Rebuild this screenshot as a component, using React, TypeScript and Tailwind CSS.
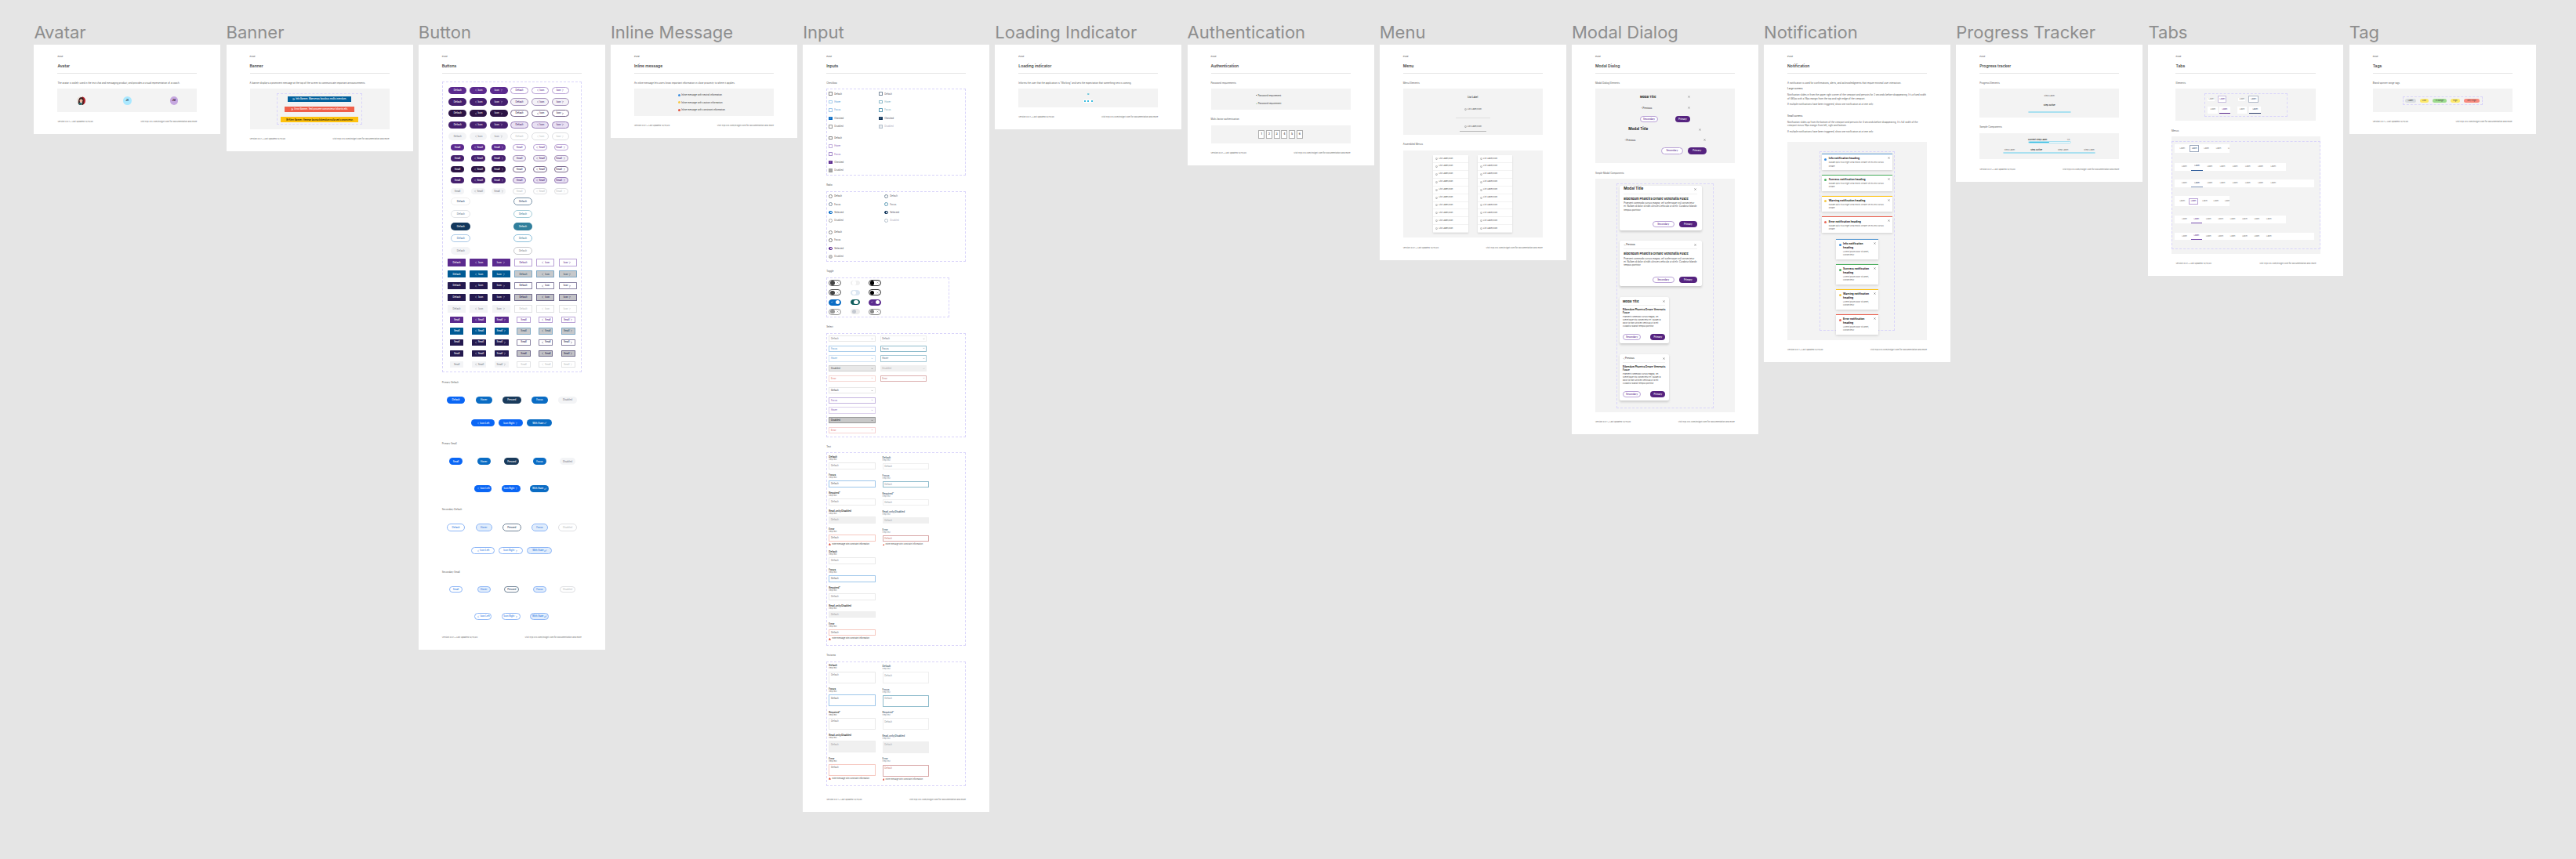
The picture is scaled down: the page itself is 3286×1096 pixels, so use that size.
import type { ReactNode } from "react";
import clsx from "clsx";
import { AlertTriangle, Check, ChevronDown, ChevronLeft, ChevronRight, CornerDownLeft, Info, Loader, X } from "lucide-react";

const dashed = "border border-dashed border-[#d9d4fa]";
const grey = "bg-[#f3f3f3]";

function Label({ children, className }: { children: ReactNode; className?: string }) {
  return <p className={clsx("mt-[10px] mb-[5.5px] text-[2.9px] leading-[4px] text-[#555] whitespace-nowrap", className)}>{children}</p>;
}

function Frame({
  name,
  title,
  height,
  wide,
  children,
}: {
  name: string;
  title: string;
  height: string;
  wide?: boolean;
  children: ReactNode;
}) {
  return (
    <div className="shrink-0">
      <div className="mt-[28px] mb-[3px] h-[26px] whitespace-nowrap text-[22px] leading-[26px] text-[#8e8e8e]">{name}</div>
      <div className={clsx("flex flex-col bg-white pt-[13.3px]", wide ? "w-[249px] px-[35px]" : "w-[238px] px-[30px]", height)}>
        <p className="text-[2.7px] leading-[4px] text-[#444]">Pulse</p>
        <p className="mt-[6.7px] h-[6px] text-[5px] font-semibold leading-[6px] text-[#444] whitespace-nowrap">{title}</p>
        <div className="mt-[6px] h-[1px] shrink-0 bg-[#e4e4e4]" />
        {children}
        <div className="mt-auto flex justify-between pb-[14px] pt-[2px] text-[2.6px] leading-[4px] text-[#666] whitespace-nowrap">
          <span>Version 0.0.1 • Last updated 12/15/20</span>
          <span>Visit hyp.cvs.com/insight.com for documentation and more</span>
        </div>
      </div>
    </div>
  );
}

function Btn({ text, icon, className }: { text: string; icon?: "left" | "right" | "return"; className?: string }) {
  return (
    <div className={clsx("flex shrink-0 items-center justify-center gap-[0.8px] whitespace-nowrap text-[2.9px] font-medium", className)}>
      {icon === "left" && <ChevronLeft size={4} strokeWidth={2.6} />}
      {text}
      {icon === "right" && <ChevronRight size={4} strokeWidth={2.6} />}
      {icon === "return" && <CornerDownLeft size={3.4} strokeWidth={2.4} />}
    </div>
  );
}

const pillRows = [
  ["bg-[#5b2a8e] text-white", "border border-[#b9a2d6] bg-white text-[#5b2a8e]"],
  ["bg-[#45206e] text-white", "border border-[#a794bd] bg-[#f4f2f7] text-[#45206e]"],
  ["bg-[#2c1445] text-white", "border border-[#7b6a8e] bg-white text-[#2c1445]"],
  ["bg-[#45206e] text-white", "border border-[#9a80ba] bg-[#e9e1f3] text-[#45206e]"],
  ["bg-[#f3f4f6] text-[#7f838c]", "border border-[#dfe0e3] bg-white text-[#bcbfc4]"],
];

const squareRows = [
  ["bg-[#5b2a8e] text-white", "border border-[#b9a2d6] bg-white text-[#5b2a8e]"],
  ["bg-[#005a94] text-white", "border border-[#7fa9c6] bg-[#c6c8ca] text-[#2b4a66]"],
  ["bg-[#241a4f] text-white", "border border-[#8a84a3] bg-white text-[#241a4f]"],
  ["bg-[#241a4f] text-white", "border border-[#6f6a8c] bg-[#c2c2c6] text-[#241a4f]"],
  ["bg-[#f3f4f6] text-[#7f838c]", "border border-[#e2e3e5] bg-white text-[#bcbfc4]"],
];

function Matrix({
  rows,
  first,
  widths,
  shape,
  rowGap,
  colGap,
  indent,
  top,
}: {
  rows: string[][];
  first: string;
  widths: string[];
  shape: string;
  rowGap: string;
  colGap: string;
  indent: string;
  top: string;
}) {
  const labels: { text: string; icon?: "left" | "right" }[] = [
    { text: first },
    { text: first === "Default" ? "Icon" : first, icon: "left" },
    { text: first === "Default" ? "Icon" : first, icon: "right" },
  ];
  return (
    <div className={clsx("flex flex-col", rowGap, indent, top)}>
      {rows.map((row, i) => (
        <div key={i} className={clsx("flex", colGap)}>
          {[0, 1].map((t) =>
            labels.map((l, j) => <Btn key={`${t}${j}`} text={l.text} icon={l.icon} className={clsx(shape, widths[t * 3 + j], row[t])} />),
          )}
        </div>
      ))}
    </div>
  );
}

function ButtonSection({
  title,
  small,
  tones,
  icons,
  rowTwoGap,
  labelTop,
}: {
  title: string;
  small?: boolean;
  tones: string[];
  icons: string[];
  rowTwoGap: string;
  labelTop: string;
}) {
  const names = small ? ["Small", "Hover", "Pressed", "Focus", "Disabled"] : ["Default", "Hover", "Pressed", "Focus", "Disabled"];
  const w = small
    ? ["w-[16.3px]", "w-[17px]", "w-[19.3px]", "w-[17px]", "w-[20.7px]"]
    : ["w-[23px]", "w-[21px]", "w-[24px]", "w-[21.3px]", "w-[24.7px]"];
  const w2 = small ? ["w-[22.3px]", "w-[23.7px]", "w-[24.3px]"] : ["w-[29.7px]", "w-[31.7px]", "w-[32px]"];
  const h = small ? "h-[8.7px] text-[2.6px]" : "h-[9.3px]";
  return (
    <div>
      <Label className={clsx("!mb-0", labelTop)}>{title}</Label>
      <div className="mt-[16px] grid grid-cols-5 justify-items-center">
        {names.map((n, i) => (
          <Btn key={n} text={n} className={clsx("rounded-full", h, w[i], tones[i])} />
        ))}
      </div>
      <div className={clsx("flex justify-center", small ? "mt-[26px]" : "mt-[20.3px]", rowTwoGap)}>
        <Btn text="Icon Left" icon="left" className={clsx("rounded-full", h, w2[0], icons[0])} />
        <Btn text="Icon Right" icon="right" className={clsx("rounded-full", h, w2[1], icons[1])} />
        <Btn text="With State" icon="return" className={clsx("rounded-full", h, w2[2], icons[2])} />
      </div>
    </div>
  );
}

const primaryTones = [
  "bg-[#0a66f5] text-white",
  "bg-[#0a6cc4] text-white",
  "bg-[#1a3b5c] text-white",
  "bg-[#0a6cc4] text-white",
  "bg-[#f3f4f6] text-[#7f838c]",
];
const secondaryTones = [
  "border border-[#8db6f7] bg-white text-[#2f78e0]",
  "border border-[#8db6f7] bg-[#e1edfc] text-[#2f78e0]",
  "border border-[#75879a] bg-white text-[#1a3b5c]",
  "border border-[#8db6f7] bg-[#e1edfc] text-[#2f78e0]",
  "border border-[#dfe0e3] bg-white text-[#bcbfc4]",
];
const primaryIcons = ["bg-[#0a66f5] text-white", "bg-[#0a66f5] text-white", "bg-[#0a6cc4] text-white"];
const secondaryIcons = [
  "border border-[#8db6f7] bg-white text-[#2f78e0]",
  "border border-[#8db6f7] bg-white text-[#2f78e0]",
  "border border-[#8db6f7] bg-[#e1edfc] text-[#2f78e0]",
];

function Buttons() {
  return (
    <>
      <div className={clsx("mt-[9.6px] h-[371.3px] shrink-0", dashed)}>
        <Matrix
          rows={pillRows}
          first="Default"
          shape="rounded-full h-[9.3px]"
          widths={["w-[23.3px]", "w-[22.7px]", "w-[22.7px]", "w-[23.3px]", "w-[22.7px]", "w-[22.7px]"]}
          rowGap="gap-[5.37px]"
          colGap="gap-[3.4px]"
          indent="ml-[7.3px]"
          top="mt-[6px]"
        />
        <Matrix
          rows={pillRows}
          first="Small"
          shape="rounded-full h-[8.7px] text-[2.6px]"
          widths={["w-[17px]", "w-[18px]", "w-[18px]", "w-[17px]", "w-[18px]", "w-[18px]"]}
          rowGap="gap-[5.3px]"
          colGap="gap-[8.7px]"
          indent="ml-[10.3px]"
          top="mt-[5.3px]"
        />
        <div className="ml-[10.7px] mt-[4px] flex flex-col gap-[5.67px]">
          {[
            ["border border-[#eeeeee] bg-white text-[#2f4a6d]", "border border-[#7a93a8] bg-white text-[#2f4a6d]"],
            ["border border-[#e3e5e8] bg-white text-[#6d7f94]", "border border-[#a5cdd9] bg-white text-[#3f7f9a]"],
            ["bg-[#12375c] text-white", "bg-[#317f9c] text-white"],
            ["border border-[#a9c8e6] bg-white text-[#3f78b0]", "border border-[#8cc0da] bg-white text-[#3f7f9a]"],
            ["bg-[#f3f4f6] text-[#7f838c]", "border border-[#c8c9cc] bg-white text-[#8a8d92]"],
          ].map((r, i) => (
            <div key={i} className="flex gap-[55px]">
              <Btn text="Default" className={clsx("h-[10px] w-[24.7px] rounded-full", r[0])} />
              <Btn text="Default" className={clsx("h-[10px] w-[23.7px] rounded-full", r[1])} />
            </div>
          ))}
        </div>
        <Matrix
          rows={squareRows}
          first="Default"
          shape="h-[9.3px] rounded-[0.6px]"
          widths={Array(6).fill("w-[23px]")}
          rowGap="gap-[5.45px]"
          colGap="gap-[5.3px]"
          indent="ml-[6.3px]"
          top="mt-[5.35px]"
        />
        <Matrix
          rows={squareRows}
          first="Small"
          shape="h-[8.3px] rounded-[0.6px] text-[2.6px]"
          widths={["w-[17.3px]", "w-[18px]", "w-[18px]", "w-[17.3px]", "w-[18px]", "w-[18px]"]}
          rowGap="gap-[5.9px]"
          colGap="gap-[10.7px]"
          indent="ml-[9.3px]"
          top="mt-[5.5px]"
        />
      </div>
      <ButtonSection title="Primary Default" labelTop="!mt-[10.7px]" tones={primaryTones} icons={primaryIcons} rowTwoGap="gap-[5px]" />
      <ButtonSection title="Primary Small" labelTop="!mt-[20px]" small tones={primaryTones} icons={primaryIcons} rowTwoGap="gap-[12.5px]" />
      <ButtonSection title="Secondary Default" labelTop="!mt-[20.6px]" tones={secondaryTones} icons={secondaryIcons} rowTwoGap="gap-[5px]" />
      <ButtonSection title="Secondary Small" labelTop="!mt-[20.3px]" small tones={secondaryTones} icons={secondaryIcons} rowTwoGap="gap-[12.5px]" />
    </>
  );
}

function Avatars() {
  return (
    <>
      <Label>The avatar is widely used in the text chat and messaging product, and provides a visual representation of a coach.</Label>
      <div className={clsx("grid h-[29.7px] grid-cols-3 place-items-center", grey)}>
        <svg width="11" height="11" viewBox="0 0 22 22">
          <clipPath id="face">
            <circle cx="11" cy="11" r="11" />
          </clipPath>
          <g clipPath="url(#face)">
            <rect width="22" height="22" fill="#eadfd8" />
            <rect x="14" width="8" height="22" fill="#b3202a" />
            <path d="M4 22 C3 8 6 2 12 2 C18 2 18 10 17 22 L13 22 C15 14 14 8 11 7 C8 8 8 18 9 22Z" fill="#3c1d1d" />
            <circle cx="11" cy="11" r="4" fill="#e9b9a0" />
            <rect x="5" y="16" width="8" height="6" fill="#2b6a6a" />
          </g>
        </svg>
        <div className="flex h-[10.4px] w-[10.4px] items-center justify-center rounded-full bg-[#a9e8ff] text-[3px] font-semibold text-[#123]">JA</div>
        <div className="flex h-[10.4px] w-[10.4px] items-center justify-center rounded-full bg-[#c6a8e0] text-[3px] font-semibold text-[#312]">JM</div>
      </div>
    </>
  );
}

function Banners() {
  const bars = [
    ["bg-[#00609c] text-white w-[81px] h-[6.7px]", "Info Banner. Maecenas faucibus mollis interdum."],
    ["bg-[#f0604a] text-white w-[89.5px] h-[7px]", "Error Banner. Sed posuere consectetur lobortis elit."],
    ["bg-[#ffc20e] text-black w-[99px] h-[7px]", "Alert Banner. Aenean lacinia bibendum nulla sed consectetur."],
  ];
  return (
    <>
      <Label>A banner displays a prominent message at the top of the screen to communicate important announcements.</Label>
      <div className={clsx("flex h-[52px] items-center justify-center", grey)}>
        <div className={clsx("flex h-[40px] w-[109px] flex-col items-center gap-[6.3px] pt-[2.5px]", dashed)}>
          {bars.map(([c, t]) => (
            <div key={t} className={clsx("flex items-center justify-center gap-[1px] whitespace-nowrap text-[2.8px] font-medium", c)}>
              <Info size={3} strokeWidth={3} />
              {t}
            </div>
          ))}
        </div>
      </div>
    </>
  );
}

function InlineMessages() {
  return (
    <>
      <Label>An inline message lets users know important information in close proximity to where it applies.</Label>
      <div className={clsx("flex h-[34.7px] flex-col gap-[5.5px] pl-[56px] pt-[5.8px]", grey)}>
        {[
          ["bg-[#3d8fe0]", "neutral"],
          ["bg-[#f6c945]", "caution"],
          ["bg-[#e0533f]", "constraint"],
        ].map(([c, t]) => (
          <div key={t} className="flex h-[4px] items-center gap-[1.2px] whitespace-nowrap text-[2.8px] text-[#333]">
            <span className={clsx("h-[3px] w-[3px] rounded-full", c)} />
            Inline message with {t} information.
          </div>
        ))}
      </div>
    </>
  );
}

function Loading() {
  return (
    <>
      <Label>Informs the user that the application is "Working" and sets the expectation that something new is coming.</Label>
      <div className={clsx("flex h-[23.7px] flex-col items-center pt-[5.2px]", grey)}>
        <Loader size={2.4} strokeWidth={4} className="text-[#00a3c9]" />
        <div className="mt-[6.4px] flex h-[3.7px] w-[12px] items-center justify-center gap-[2.6px] bg-white">
          <span className="h-[1.8px] w-[1.8px] rounded-full bg-[#00a9d4]" />
          <span className="h-[1.8px] w-[1.8px] rounded-full bg-[#00a9d4]" />
          <span className="h-[1.8px] w-[1.8px] rounded-full bg-[#00a9d4]" />
        </div>
      </div>
    </>
  );
}

function Authentication() {
  return (
    <>
      <Label>Password requirements</Label>
      <div className={clsx("flex h-[27px] flex-col gap-[6.4px] pl-[57px] pt-[6.3px]", grey)}>
        <div className="flex h-[4px] items-center gap-[1px] text-[2.8px] text-[#333]">
          <span className="h-[1px] w-[1px] rounded-full bg-[#333]" />
          <span className="ml-[1px]">Password requirement</span>
        </div>
        <div className="flex h-[4px] items-center gap-[0.6px] text-[2.8px] text-[#333]">
          <Check size={2.6} strokeWidth={4} className="text-[#3da35a]" />
          Password requirement
        </div>
      </div>
      <Label>Multi-factor authentication</Label>
      <div className={clsx("flex h-[23px] items-center justify-center gap-[1.5px]", grey)}>
        {[1, 2, 3, 4, 5, 6].map((n) => (
          <div key={n} className="flex h-[11.7px] w-[8.2px] items-center justify-center border border-[#b0b0b0] bg-white text-[3.4px] font-medium text-[#222]">
            {n}
          </div>
        ))}
      </div>
    </>
  );
}

function MenuItem({ className }: { className?: string }) {
  return (
    <div className={clsx("flex items-center gap-[1.4px] whitespace-nowrap text-[2.6px] text-[#444]", className)}>
      <svg width="3" height="3" viewBox="0 0 6 6" fill="none" stroke="#777" strokeWidth="0.8">
        <circle cx="3" cy="3" r="2.2" />
        <path d="M3 5.5V3" />
      </svg>
      List Label/Icon
    </div>
  );
}

function Menus() {
  return (
    <>
      <Label>Menu Elements</Label>
      <div className={clsx("flex h-[59px] flex-col items-center pt-[8.7px]", grey)}>
        <p className="h-[4px] text-[2.8px] font-semibold leading-[4px] text-[#333]">List Label</p>
        <MenuItem className="mt-[11.6px] h-[4px]" />
        <div className="mt-[8.7px] h-[1px] w-[44px] bg-[#dedede]" />
        <MenuItem className="mt-[8.5px] h-[4px]" />
        <div className="mt-[2.6px] h-[1px] w-[34px] bg-[#b5b5b5]" />
      </div>
      <Label>Assembled Menus</Label>
      <div className={clsx("flex h-[111.3px] justify-center gap-[12px] pt-[6px]", grey)}>
        {[0, 1].map((c) => (
          <div key={c} className="h-[99.3px] w-[44.6px] bg-white shadow-[0_1px_2px_rgba(0,0,0,0.12)]">
            {Array.from({ length: 10 }).map((_, i) => (
              <MenuItem key={i} className="h-[9.93px] border-b border-[#f2f2f2] pl-[3px]" />
            ))}
          </div>
        ))}
      </div>
    </>
  );
}

const longBody =
  "Praesent commodo cursus magna, vel scelerisque nisl consectetur et. Nullam id dolor id nibh ultricies vehicula ut id elit. Curabitur blandit tempus porttitor.";

function Head({ prev, big }: { prev?: boolean; big?: boolean }) {
  return prev ? (
    <span className="flex items-center text-[2.8px] font-medium text-[#333]">
      <ChevronLeft size={3} strokeWidth={2.6} />
      Previous
    </span>
  ) : (
    <span className={clsx("font-bold text-[#222]", big ? "text-[4.6px]" : "text-[3.8px]")}>Modal Title</span>
  );
}

function ModalCard({ prev, small, className }: { prev?: boolean; small?: boolean; className: string }) {
  return (
    <div className={clsx("flex flex-col rounded-[2px] bg-white shadow-[0_1.5px_3px_rgba(0,0,0,0.16)]", small ? "w-[63.3px] px-[4.5px]" : "w-[105.3px] px-[5.7px]", className)}>
      <div className={clsx("flex h-[11px] shrink-0 items-center justify-between border-b border-[#f1f1f1]", small ? "" : "pr-[0.8px]")}>
        <Head prev={prev} big={!small} />
        <X size={3} strokeWidth={3.4} className="text-[#222]" />
      </div>
      <p className={clsx("mt-[3px] font-bold text-[#222]", small ? "text-[3px] leading-[4px]" : "text-[3.9px] leading-[5px] whitespace-nowrap")}>
        Bibendum Pharetra Ornare Venenatis Fusce
      </p>
      <p className={clsx("mt-[1.4px] text-[#444]", small ? "text-[2.5px] leading-[4.1px]" : "text-[2.85px] leading-[4.4px]")}>{longBody}</p>
      <div className={clsx("mt-auto flex pb-[4px]", small ? "justify-between" : "justify-end gap-[5.7px]")}>
        <Btn
          text="Secondary"
          className={clsx("h-[8.6px] rounded-full border border-[#b9a2d6] bg-white text-[2.4px] text-[#5b2a8e]", small ? "w-[23px]" : "w-[28.3px]")}
        />
        <Btn text="Primary" className={clsx("h-[8.6px] rounded-full bg-[#55237f] text-[2.4px] text-white", small ? "w-[19px]" : "w-[23.7px]")} />
      </div>
    </div>
  );
}

function Modals() {
  return (
    <>
      <Label>Modal Dialog Elements</Label>
      <div className={clsx("relative flex h-[95px] flex-col text-[#222]", grey)}>
        <div className="ml-[57px] mt-[8px] flex h-[5px] w-[64px] items-center justify-between">
          <Head />
          <X size={3} strokeWidth={3} />
        </div>
        <div className="ml-[57.7px] mt-[9px] flex h-[5px] w-[63.3px] items-center justify-between">
          <Head prev />
          <X size={3} strokeWidth={3} />
        </div>
        <div className="ml-[57px] mt-[7.8px] flex w-[64px] items-center justify-between">
          <Btn text="Secondary" className="h-[8px] w-[23.3px] rounded-full border border-[#b9a2d6] bg-white text-[2.3px] text-[#5b2a8e]" />
          <Btn text="Primary" className="h-[8px] w-[19px] rounded-full bg-[#55237f] text-[2.3px] text-white" />
        </div>
        <div className="ml-[42.3px] mt-[6px] flex h-[6px] w-[93px] items-center justify-between">
          <Head big />
          <X size={3} strokeWidth={3} />
        </div>
        <div className="ml-[36.7px] mt-[8px] flex h-[5px] w-[104.5px] items-center justify-between">
          <Head prev />
          <X size={3} strokeWidth={3} />
        </div>
        <div className="ml-[84.3px] mt-[6.5px] flex w-[57.4px] items-center justify-between">
          <Btn text="Secondary" className="h-[9px] w-[27.4px] rounded-full border border-[#b9a2d6] bg-white text-[2.6px] text-[#5b2a8e]" />
          <Btn text="Primary" className="h-[9px] w-[23.7px] rounded-full bg-[#55237f] text-[2.6px] text-white" />
        </div>
      </div>
      <Label className="!mt-[10.2px] !mb-[5px]">Simple Modal Components</Label>
      <div className={clsx("flex h-[298.5px] justify-center pt-[6px]", grey)}>
        <div className={clsx("flex h-[287px] w-[123.4px] flex-col pl-[2.4px] pt-[2px]", dashed)}>
          <ModalCard className="h-[57.5px]" />
          <ModalCard prev className="mt-[13px] h-[58px]" />
          <ModalCard small className="mt-[14.3px] h-[59px]" />
          <ModalCard small prev className="mt-[13.8px] h-[59px]" />
        </div>
      </div>
    </>
  );
}

const tones = [
  ["Info", "border-[#5a9bd4]", "bg-[#3d8fe0]"],
  ["Success", "border-[#4caf60]", "bg-[#4caf60]"],
  ["Warning", "border-[#ffc20e]", "bg-[#f6c945]"],
  ["Error", "border-[#ea5a47]", "bg-[#ea6a5a]"],
];

function Toast({ tone, small }: { tone: string[]; small?: boolean }) {
  return (
    <div
      className={clsx(
        "relative flex shrink-0 flex-col border-t-[1.4px] bg-white shadow-[0_1px_3px_rgba(0,0,0,0.16)]",
        tone[1],
        small ? "w-[53.3px] pb-[2.4px] pl-[8.7px] pr-[10px] pt-[3.4px]" : "h-[20.7px] w-[90.7px] pl-[9px] pt-[3.4px]",
      )}
    >
      <span className={clsx("absolute top-[4.6px] h-[3px] w-[3px] rounded-full", small ? "left-[3.3px]" : "left-[3.2px]", tone[2])} />
      <X size={3} strokeWidth={3.2} className="absolute right-[3px] top-[3px] text-[#222]" />
      <p className="text-[3.3px] font-bold leading-[4.4px] text-[#222]">{tone[0]} notification heading</p>
      <p className={clsx("mt-[1.4px] text-[#666]", small ? "w-[34px] text-[2.5px] leading-[4.4px]" : "w-[74px] text-[2.55px] leading-[4.4px]")}>
        {small ? "Lorem ipsum dolor sit amet, consectetur." : "Nullam quis risus eget urna mollis ornare vel eu leo cursus ornare."}
      </p>
    </div>
  );
}

function Notifications() {
  return (
    <>
      <div className="mt-[9.7px] flex flex-col gap-[3.4px] text-[2.9px] leading-[4.4px] text-[#555]">
        <p>A notification is used for confirmations, alerts, and acknowledgments that require minimal user interaction.</p>
        <p className="font-medium">Large screens</p>
        <p>
          Notification slides in from the upper right corner of the viewport and persists for 3 seconds before disappearing. It's a fixed width of 480px with a
          16px margin from the top and right edge of the viewport.
        </p>
        <p>If multiple notifications have been triggered, show one notification at a time only.</p>
        <p className="mt-[7px] font-medium">Small screens</p>
        <p>
          Notification slides up from the bottom of the viewport and persists for 4 seconds before disappearing. It's full width of the viewport minus 16px
          margin from left, right and bottom.
        </p>
        <p>If multiple notifications have been triggered, show one notification at a time only.</p>
      </div>
      <div className={clsx("mt-[10.4px] flex h-[252.7px] shrink-0 justify-center pt-[12px]", grey)}>
        <div className={clsx("flex h-[229px] w-[96.4px] flex-col items-center pt-[2px]", dashed)}>
          <div className="flex flex-col gap-[6.1px]">
            {tones.map((t) => (
              <Toast key={t[0]} tone={t} />
            ))}
          </div>
          <div className="mt-[8px] flex flex-col gap-[6.2px]">
            {tones.map((t) => (
              <Toast key={t[0]} tone={t} small />
            ))}
          </div>
        </div>
      </div>
    </>
  );
}

function Bar({ width, fill }: { width: string; fill: string }) {
  return (
    <div className={clsx("h-[2.4px] overflow-hidden rounded-full border-[0.5px] border-[#a9e0f0] bg-white", width)}>
      <div className={clsx("h-full rounded-full bg-[#35bde3]", fill)} />
    </div>
  );
}

function Progress() {
  return (
    <>
      <Label>Progress Elements</Label>
      <div className={clsx("flex h-[37px] flex-col items-center pt-[6.7px] text-[2.7px]", grey)}>
        <p className="h-[4px] leading-[4px] text-[#666]">Step Label</p>
        <p className="mt-[8.3px] h-[4px] font-semibold leading-[4px] text-[#222]">Step Active</p>
        <div className="mt-[5.5px]">
          <Bar width="w-[54.5px]" fill="w-[56%]" />
        </div>
      </div>
      <Label>Sample Components</Label>
      <div className={clsx("flex h-[33px] flex-col items-center pt-[5.7px] text-[2.7px]", grey)}>
        <div className="flex h-[4px] w-[54.5px] justify-between pr-[1px] leading-[4px]">
          <span className="font-semibold text-[#222]">Current Step Label</span>
          <span className="text-[#555]">1/5</span>
        </div>
        <div className="mt-[0.6px]">
          <Bar width="w-[54.5px]" fill="w-[50%]" />
        </div>
        <div className="mt-[6.5px] flex h-[4px] w-[118px] justify-between px-[1.5px] leading-[4px] text-[#666]">
          <span>Step Label</span>
          <span className="font-semibold text-[#222]">Step Active</span>
          <span>Step Label</span>
          <span>Step Label</span>
        </div>
        <div className="mt-[0.8px]">
          <Bar width="w-[118px]" fill="w-[50%]" />
        </div>
      </div>
    </>
  );
}

function TabRow({
  bar,
  count,
  cell,
  pad,
  selected,
  boxed,
  height,
  mt,
}: {
  bar: string;
  count: number;
  cell: string;
  pad: string;
  selected: string;
  boxed?: boolean;
  height: string;
  mt: string;
}) {
  return (
    <div className={clsx("flex items-center overflow-hidden bg-white text-[2.6px] text-[#777]", bar, height, pad, mt)}>
      {Array.from({ length: count }).map((_, i) => (
        <div key={i} className={clsx("flex h-full shrink-0 items-center justify-center", cell)}>
          {i === 1 ? (
            boxed ? (
              <span className={clsx("flex h-[8.3px] w-[12.3px] items-center justify-center border", selected)}>Label</span>
            ) : (
              <span className={clsx("flex h-full w-[14.4px] items-center justify-center border-b", selected)}>Label</span>
            )
          ) : (
            "Label"
          )}
        </div>
      ))}
    </div>
  );
}

function TabsDemo() {
  return (
    <>
      <Label>Elements</Label>
      <div className={clsx("flex h-[41px] justify-center pt-[6px]", grey)}>
        <div className={clsx("flex h-[29.3px] w-[105.4px] flex-col gap-[5px] pl-[3.2px] pt-[2px] text-[2.6px] text-[#777]", dashed)}>
          <div className="flex h-[8.3px] items-center">
            <span className="w-[9px] bg-white text-center">Label</span>
            <span className="ml-[4px] flex h-[8.3px] w-[11px] items-center justify-center border border-[#c9bfe0] bg-white text-[#5b2a8e]">Label</span>
            <span className="ml-[15px] w-[9px] bg-white text-center">Label</span>
            <span className="ml-[4px] flex h-[8.3px] w-[12.5px] items-center justify-center border border-[#b3bccb] bg-white text-[#2f4a6d]">Label</span>
          </div>
          <div className="flex h-[9px] items-center">
            <span className="flex h-full w-[12.8px] items-center justify-center bg-white">Label</span>
            <span className="ml-[2px] flex h-full w-[13.4px] items-center justify-center border-b border-[#5b2a8e] bg-white text-[#5b2a8e]">Label</span>
            <span className="ml-[9px] flex h-full w-[12.8px] items-center justify-center bg-white">Label</span>
            <span className="ml-[2.6px] flex h-full w-[15.4px] items-center justify-center border-b border-[#2f3f6d] bg-white text-[#2f4a6d]">Label</span>
          </div>
        </div>
      </div>
      <Label className="-ml-[5.5px] !mt-[10.6px] !mb-[5.4px]">Menus</Label>
      <div className={clsx("-mx-[5.5px] h-[149.7px] pt-[5.3px]", grey)}>
        <div className={clsx("flex h-[138.4px] flex-col pl-[2.6px]", dashed)}>
          <TabRow mt="mt-[3px]" bar="w-[70px]" height="h-[11.7px]" count={5} cell="w-[15.4px]" pad="pl-[2.6px]" selected="border-[#9aa7bd] text-[#2f4a6d]" boxed />
          <TabRow mt="mt-[12.3px]" bar="w-[142.4px]" height="h-[10px]" count={8} cell="w-[16.2px]" pad="pl-[4.8px]" selected="border-[#2f5d9a] text-[#2f4a6d]" />
          <TabRow mt="mt-[11.7px]" bar="w-[178.4px]" height="h-[9.3px]" count={8} cell="w-[16.2px]" pad="pl-[4.8px]" selected="border-[#7f96b8] text-[#2f4a6d]" />
          <TabRow mt="mt-[11.7px]" bar="w-[70px]" height="h-[13px]" count={5} cell="w-[14.4px]" pad="pl-[3px]" selected="border-[#b9a2d6] text-[#5b2a8e]" boxed />
          <TabRow mt="mt-[12px]" bar="w-[142.4px]" height="h-[9.3px]" count={8} cell="w-[15.4px]" pad="pl-[5.3px]" selected="border-[#7a4fb0] text-[#5b2a8e]" />
          <TabRow mt="mt-[12.4px]" bar="w-[178.4px]" height="h-[9.3px]" count={8} cell="w-[15.4px]" pad="pl-[5.3px]" selected="border-[#7a4fb0] text-[#5b2a8e]" />
        </div>
      </div>
    </>
  );
}

function Tags() {
  return (
    <>
      <Label>Brand spinner range tags</Label>
      <div className={clsx("flex h-[30px] items-center justify-center", grey)}>
        <div className={clsx("flex h-[11.4px] w-[102px] items-center gap-[5px] pl-[2.6px] text-[2.5px] text-[#444]", dashed)}>
          <span className="flex h-[5.4px] w-[13.4px] items-center justify-center rounded-full bg-[#d9dde1]">Label</span>
          <span className="flex h-[5.4px] w-[11.3px] items-center justify-center rounded-full bg-[#fde96b]">Low</span>
          <span className="flex h-[5.4px] w-[18px] items-center justify-center rounded-full bg-[#9ddc8f]">In Range</span>
          <span className="flex h-[5.4px] w-[11.8px] items-center justify-center rounded-full bg-[#fde96b]">High</span>
          <span className="flex h-[5.4px] w-[20px] items-center justify-center rounded-full bg-[#f98b7f]">Very High</span>
        </div>
      </div>
    </>
  );
}

function CheckCol({ items, round }: { items: [string, string, string, string?][]; round?: boolean }) {
  return (
    <div className="flex flex-col gap-[5.7px]">
      {items.map(([label, box, text, inner], i) => (
        <div key={i} className="flex h-[4.7px] items-center gap-[2.3px] text-[2.8px]">
          <span className={clsx("flex h-[4.7px] w-[4.7px] shrink-0 items-center justify-center border", round ? "rounded-full" : "rounded-[0.5px]", box)}>
            {inner === "check" && <Check size={3.4} strokeWidth={4} className="text-white" />}
            {inner === "dot" && <span className="h-[2px] w-[2px] rounded-full bg-white" />}
          </span>
          <span className={text}>{label}</span>
        </div>
      ))}
    </div>
  );
}

function Toggle({ on, knob, ring, icon, w }: { on?: boolean; knob: string; ring: string; icon?: string; w?: string }) {
  return (
    <div className={clsx("flex shrink-0 items-center justify-between rounded-full border px-[1px]", w ?? "h-[8px] w-[15.7px]", on && "flex-row-reverse", ring)}>
      <span className={clsx("h-[5.2px] w-[5.2px] rounded-full", knob)} />
      {icon === "x" && <X size={3} strokeWidth={3} className="mr-[1px] text-[#666]" />}
      {icon === "check" && <Check size={3} strokeWidth={3.4} className="ml-[1px] text-white" />}
    </div>
  );
}

function SelectBox({ text, className }: { text: string; className: string }) {
  return (
    <div className={clsx("flex h-[8.3px] w-[59.7px] items-center justify-between rounded-[0.6px] border px-[1.6px] text-[2.9px]", className)}>
      {text}
      <ChevronDown size={3} strokeWidth={2.6} />
    </div>
  );
}

const fieldStyles: [string, string, string][] = [
  ["Default", "border-[#eaeaea] text-[#777]", "text-[#777]"],
  ["Focus", "border-[#9dc6ea] text-[#555]", "text-[#777]"],
  ["Required*", "border-[#eaeaea] text-[#777]", "text-[#777]"],
  ["Read-only/Disabled", "border-[#eeeeee] bg-[#f0f0f0] text-[#999]", "text-[#777]"],
  ["Error", "border-[#f6c8c0] text-[#666]", "text-[#e06a5c]"],
];

const fieldStylesAlt: [string, string, string][] = [
  ["Default", "border-[#efefef] text-[#8a93a0]", ""],
  ["Focus", "border-[#8fbccc] text-[#8a93a0]", ""],
  ["Required*", "border-[#efefef] text-[#8a93a0]", ""],
  ["Read-only/Disabled", "border-[#f0f0f0] bg-[#f0f0f0] text-[#a0a6ae]", ""],
  ["Error", "border-[#d9a9a9] text-[#c9736f]", ""],
];

function Fields({ styles, area, alt }: { styles: [string, string, string][]; area?: boolean; alt?: boolean }) {
  return (
    <div className={clsx("flex w-[59.7px] flex-col", area ? "gap-[5.4px]" : "gap-[5.5px]", alt && "mt-[0.7px]")}>
      {styles.map(([label, box]) => (
        <div key={label} className="flex flex-col">
          <p className={clsx("h-[4px] whitespace-nowrap text-[3px] font-semibold leading-[4px]", alt ? "text-[#44566c]" : "text-[#222]")}>{label}</p>
          <p className={clsx("h-[4px] text-[2.4px] leading-[4px]", alt ? "text-[#7a8796]" : "text-[#666]")}>Help text</p>
          <div className={clsx("mt-[1.2px] rounded-[0.6px] border px-[1.6px] text-[2.9px]", area ? "h-[15px] pt-[1.4px]" : "flex h-[8.3px] items-center", box)}>Default</div>
          {label === "Error" && (
            <p className={clsx("mt-[1.8px] flex h-[4px] items-center gap-[1px] whitespace-nowrap text-[2.4px]", alt ? "text-[#555]" : "text-[#444]")}>
              <AlertTriangle size={2.8} strokeWidth={3} className="text-[#e0533f]" fill="#e0533f" />
              Inline message with constraint information.
            </p>
          )}
        </div>
      ))}
    </div>
  );
}

function Inputs() {
  const blue = "border-[#9dc6ea]";
  return (
    <>
      <Label>Checkbox</Label>
      <div className={clsx("flex flex-col gap-[10px] pb-[3.4px] pl-[2.2px] pt-[2.9px]", dashed)}>
        <div className="flex">
          <div className="w-[64px]">
            <CheckCol
              items={[
                ["Default", "border-[#888]", "text-[#444]"],
                ["Hover", "border-[#a9d0ee]", "text-[#3f8ed0]"],
                ["Focus", blue, "text-[#3f8ed0]"],
                ["Checked", "border-[#0a6cc4] bg-[#0a6cc4]", "text-[#444]", "check"],
                ["Disabled", "border-[#999]", "text-[#666]"],
              ]}
            />
          </div>
          <CheckCol
            items={[
              ["Default", "border-[#7a8b9c]", "text-[#556]"],
              ["Hover", "border-[#8fbccc]", "text-[#6aa0b5]"],
              ["Focus", "border-[#5b9ab5]", "text-[#6aa0b5]"],
              ["Checked", "border-[#12375c] bg-[#12375c]", "text-[#445]", "check"],
              ["Disabled", "border-[#b5c0cc] bg-[#e8ecf0]", "text-[#aab]"],
            ]}
          />
        </div>
        <CheckCol
          items={[
            ["Default", "border-[#888]", "text-[#444]"],
            ["Hover", "border-[#c2b0de]", "text-[#7a4fb0]"],
            ["Focus", "border-[#a78fcb]", "text-[#7a4fb0]"],
            ["Checked", "border-[#5b2a8e] bg-[#5b2a8e]", "text-[#444]", "check"],
            ["Disabled", "border-[#999] bg-[#aaa]", "text-[#666]"],
          ]}
        />
      </div>
      <Label>Radio</Label>
      <div className={clsx("flex flex-col gap-[10px] pb-[3.4px] pl-[2.2px] pt-[3.4px]", dashed)}>
        <div className="flex">
          <div className="w-[71px]">
            <CheckCol
              round
              items={[
                ["Default", "border-[#888]", "text-[#444]"],
                ["Focus", "border-[#7a8b9c]", "text-[#444]"],
                ["Selected", "border-[#0a6cc4] bg-[#0a6cc4]", "text-[#444]", "dot"],
                ["Disabled", "border-[#aaa]", "text-[#666]"],
              ]}
            />
          </div>
          <CheckCol
            round
            items={[
              ["Default", "border-[#7a8b9c]", "text-[#556]"],
              ["Focus", "border-[#5b9ab5]", "text-[#556]"],
              ["Selected", "border-[#12375c] bg-[#12375c]", "text-[#445]", "dot"],
              ["Disabled", "border-[#b5c0cc]", "text-[#aab]"],
            ]}
          />
        </div>
        <CheckCol
          round
          items={[
            ["Default", "border-[#888]", "text-[#444]"],
            ["Focus", "border-[#777]", "text-[#444]"],
            ["Selected", "border-[#5b2a8e] bg-[#5b2a8e]", "text-[#444]", "dot"],
            ["Disabled", "border-[#aaa] bg-[#ccc]", "text-[#666]"],
          ]}
        />
      </div>
      <Label>Toggle</Label>
      <div className={clsx("flex w-[156.7px] flex-col gap-[4.3px] pb-[2.6px] pl-[2.2px] pt-[2.4px]", dashed)}>
        <div className="flex items-center gap-[11.6px]">
          <Toggle knob="bg-[#444]" ring="border-[#666]" icon="x" />
          <Toggle knob="bg-white" ring="border-[#f0f0f0] bg-[#f0f0f0]" w="h-[6.7px] w-[12px]" />
          <Toggle knob="bg-black" ring="border-[#333]" icon="x" />
        </div>
        <div className="flex items-center gap-[11.6px]">
          <Toggle knob="bg-[#444]" ring="border-[#555]" icon="x" />
          <Toggle knob="bg-white" ring="border-[#dbe6f2] bg-[#dbe6f2]" w="h-[7.4px] w-[12px]" />
          <Toggle knob="bg-black" ring="border-[#333]" icon="x" />
        </div>
        <div className="flex items-center gap-[11.6px]">
          <Toggle on knob="bg-white" ring="border-[#0a6cc4] bg-[#0a6cc4]" icon="check" />
          <Toggle on knob="bg-white" ring="border-[#0f5c5c] bg-[#0f5c5c]" w="h-[6.7px] w-[12px]" />
          <Toggle on knob="bg-white" ring="border-[#5b2a8e] bg-[#5b2a8e]" icon="check" />
        </div>
        <div className="flex items-center gap-[11.6px]">
          <Toggle knob="bg-[#999]" ring="border-[#999]" icon="x" />
          <Toggle knob="bg-[#c3c8d0]" ring="border-[#ececec] bg-[#ececec]" w="h-[6.7px] w-[12px]" />
          <Toggle knob="bg-[#888]" ring="border-[#888]" icon="x" />
        </div>
      </div>
      <Label>Select</Label>
      <div className={clsx("flex flex-col gap-[7px] pb-[4px] pl-[2.2px] pt-[2.2px]", dashed)}>
        <div className="flex gap-[5.6px]">
          <div className="flex flex-col gap-[4.37px]">
            <SelectBox text="Default" className="border-[#e8e8e8] text-[#777]" />
            <SelectBox text="Focus" className="border-[#a9cdeb] text-[#3f8ed0]" />
            <SelectBox text="Hover" className="border-[#cfe3f4] text-[#3f8ed0]" />
            <SelectBox text="Disabled" className="border-[#cfcfcf] bg-[#e8e8e8] text-[#444]" />
            <SelectBox text="Error" className="border-[#f5d6d2] text-[#e06a5c]" />
          </div>
          <div className="flex flex-col gap-[4.37px]">
            <SelectBox text="Default" className="border-[#efefef] text-[#667]" />
            <SelectBox text="Focus" className="border-[#8fbccc] text-[#3a5f7a]" />
            <SelectBox text="Hover" className="border-[#a5c9d6] text-[#3a5f7a]" />
            <SelectBox text="Disabled" className="border-[#f0f0f0] bg-[#f0f0f0] text-[#aaa]" />
            <SelectBox text="Error" className="border-[#dcb0b0] text-[#b56a6a]" />
          </div>
        </div>
        <div className="flex flex-col gap-[4.37px]">
          <SelectBox text="Default" className="border-[#e8e8e8] text-[#333]" />
          <SelectBox text="Focus" className="border-[#c5b5e0] text-[#7a4fb0]" />
          <SelectBox text="Hover" className="border-[#dcd0ec] text-[#7a4fb0]" />
          <SelectBox text="Disabled" className="border-[#999] bg-[#c8c8c8] text-[#222]" />
          <SelectBox text="Error" className="border-[#f7d3d4] text-[#e05c5c]" />
        </div>
      </div>
      <Label>Text</Label>
      <div className={clsx("flex flex-col gap-[5px] pb-[6px] pl-[2.2px] pt-[2.7px]", dashed)}>
        <div className="flex gap-[8.6px]">
          <Fields styles={fieldStyles} />
          <Fields styles={fieldStylesAlt} alt />
        </div>
        <Fields styles={fieldStyles} />
      </div>
      <Label>Textarea</Label>
      <div className={clsx("flex gap-[8.6px] pb-[6px] pl-[2.2px] pt-[2.7px]", dashed)}>
        <Fields styles={fieldStyles} area />
        <Fields styles={fieldStylesAlt} area alt />
      </div>
    </>
  );
}

export default function App() {
  return (
    <div className="flex h-[1096px] w-[3286px] items-start gap-[7.2px] overflow-hidden bg-[#e5e5e5] pl-[43.4px] font-['Inter',sans-serif]">
      <Frame name="Avatar" title="Avatar" height="h-[114px]">
        <Avatars />
      </Frame>
      <Frame name="Banner" title="Banner" height="h-[136px]">
        <Banners />
      </Frame>
      <Frame name="Button" title="Buttons" height="h-[772px]">
        <Buttons />
      </Frame>
      <Frame name="Inline Message" title="Inline message" height="h-[119px]">
        <InlineMessages />
      </Frame>
      <Frame name="Input" title="Inputs" height="h-[979px]">
        <Inputs />
      </Frame>
      <Frame name="Loading Indicator" title="Loading indicator" height="h-[108px]">
        <Loading />
      </Frame>
      <Frame name="Authentication" title="Authentication" height="h-[154px]">
        <Authentication />
      </Frame>
      <Frame name="Menu" title="Menu" height="h-[275px]">
        <Menus />
      </Frame>
      <Frame name="Modal Dialog" title="Modal Dialog" height="h-[497px]">
        <Modals />
      </Frame>
      <Frame name="Notification" title="Notification" height="h-[405px]">
        <Notifications />
      </Frame>
      <Frame name="Progress Tracker" title="Progress tracker" height="h-[175px]">
        <Progress />
      </Frame>
      <Frame name="Tabs" title="Tabs" height="h-[295px]" wide>
        <TabsDemo />
      </Frame>
      <Frame name="Tag" title="Tags" height="h-[114px]">
        <Tags />
      </Frame>
    </div>
  );
}
